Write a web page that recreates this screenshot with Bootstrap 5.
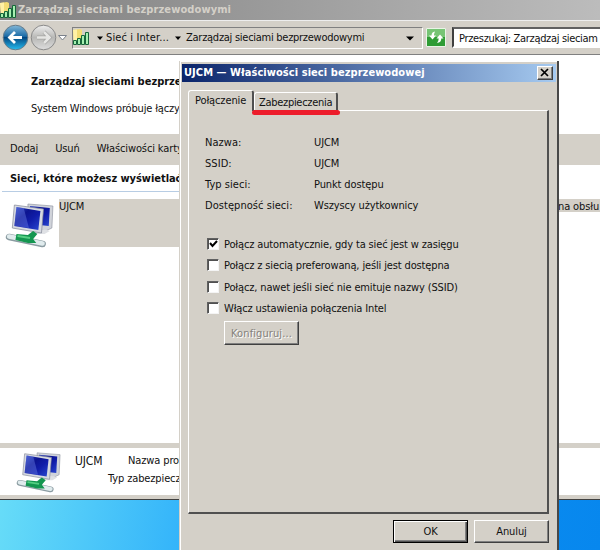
<!DOCTYPE html>
<html lang="pl">
<head>
<meta charset="utf-8">
<title>Zarządzaj sieciami bezprzewodowymi</title>
<link href="https://cdn.jsdelivr.net/npm/bootstrap@5.3.0/dist/css/bootstrap.min.css" rel="stylesheet">
<style>
:root{--face:#d4d0c8}
body{width:600px;height:550px;font:11px/14px "DejaVu Sans Condensed","DejaVu Sans",sans-serif;font-stretch:condensed;color:#111;background:linear-gradient(100deg,#67dcf8 0,#35b5fa 30%,#0b8df0 75%,#0787ee 100%) 0 500px/600px 50px no-repeat}
svg{display:block;flex:none}
.t{white-space:nowrap;letter-spacing:-.12px}
.b{font-weight:bold;letter-spacing:.06px}
.main-win{width:600px;height:500px;background:#fff;border-bottom:1px solid #404040}
.main-title{height:20px;background:linear-gradient(90deg,#808080,#bcbcbc);color:#d4d0c8;padding-top:1px}
.main-title .t{padding:2px 0 0 2px;letter-spacing:.1px}
.addr-bar{height:35px;background:var(--face);border-top:1px solid #eee;border-bottom:1px solid #808080;padding-top:6px}
.orbs{margin-top:-4px}
.crumbs{width:351px;height:22px;border:1px solid #fff;border-top-color:#808080;border-left-color:#808080}
.crumbs .t{padding-top:3px}
.c-wide{letter-spacing:.12px}
.c-tight{letter-spacing:-.27px}
.refresh{margin:0 5px 0 3px}
.search-box{width:149px;height:21px;background:#fff;border:2px solid #404040;border-color:#606060 #fff #fff #404040;border-right:0;padding:3px 0 0 5px}
.search-box .t{letter-spacing:-.33px}
.heading-area{height:79px;padding:20px 0 0 31px}
.heading-area .b{letter-spacing:0}
.sub-text{margin-top:13px;letter-spacing:-.17px}
.cmd-bar{height:31px;background:var(--face);padding:8px 0 0 10px;gap:17px}
.group-head{width:180px;height:26px;padding:7px 0 0 10px}
.group-head .b{letter-spacing:-.05px}
.group-line{height:1px;background:#b8cde4;margin:5px 0 0 -8px}
.list-area{height:252px;padding:8px 0 0 5px}
.list-icon{margin-top:3px}
.sel{width:135px;height:48px;background:var(--face);margin-left:4px;padding-top:1px}
.sel-end{height:13px;background:var(--face);margin-left:364px;width:42px;line-height:15px}
.details{height:52px;border-top:5px solid var(--face);padding:3px 0 0 16px}
.det-name{font-size:12px;margin:3px 0 0 13px;width:33px}
.det-a{margin:3px 0 4px 20px}
.bottom-edge{height:4px;background:var(--face)}
.dialog-win{left:179px;top:61px;width:380px;height:489px;background:var(--face);border-left:1px solid var(--face);border-right:2px solid #484848;box-shadow:inset 1px 1px #fff;padding:3px 1px 0 2px}
.dlg-title{height:18px;background:linear-gradient(90deg,#0a246a,#a6caf0);color:#fff;padding-left:2px}
.dlg-title .t{padding-top:2px}
.close-btn{width:16px;height:14px;margin:2px 3px 0 0}
.raised{background:var(--face);border:1px solid;border-color:#fff #404040 #404040 #fff;box-shadow:inset -1px -1px #808080}
.tabs-row{height:28px;padding:8px 0 0 6px}
.tab-btn{border:1px solid #fff;border-right:2px solid #505050;border-bottom:0;border-radius:3px 3px 0 0}
.tab-a{width:66px;height:21px;padding:3px 0 0 6px;background:var(--face);position:relative;z-index:1}
.tab-b{width:84px;height:18px;margin-top:2px;padding:3px 0 0 4px;letter-spacing:-.3px}
.panel{width:361px;height:404px;margin-left:6px;border:1px solid #fff;border-right:2px solid #505050;border-bottom:2px solid #505050;padding:25px 0 0 16px}
.red-line{left:72px;top:49px;width:88px;height:5px;border-radius:3px;background:#ed1c2b;z-index:2}
.field-row{height:21px}
.field-name{width:109px;letter-spacing:.05px}
.opts{padding:18px 0 0 2px}
.opt-row{height:21.300px}
.chk{width:12px;height:12px;margin:0 5px 0 0;background:#fff;border:1px solid;border-color:#606060 #f4f4f4 #f4f4f4 #606060;box-shadow:inset 1px 1px #505050}
.opt-row .t{letter-spacing:-.14px}
.conf{width:75px;height:24px;margin:-2px 0 0 17px;color:#85827c;text-shadow:1px 1px #fff;letter-spacing:.1px;padding-top:1px}
.foot{padding:6px 0 0 211px;gap:6px}
.ok{width:75px;height:23px;border:1px solid #000;box-shadow:inset 1px 1px #fff,inset -1px -1px #505050,inset -2px -2px #808080}
.cancel{width:75px;height:23px}
</style>
<script src="https://cdn.jsdelivr.net/npm/bootstrap@5.3.0/dist/js/bootstrap.bundle.min.js"></script>
</head>
<body class="m-0 position-relative overflow-hidden">
<svg width="0" height="0" class="position-absolute">
<defs>
<linearGradient id="scr" x2="1" y2="1"><stop stop-color="#3048c8"/><stop offset=".35" stop-color="#0c1490"/><stop offset=".6" stop-color="#101ca8"/><stop offset="1" stop-color="#2a48d0"/></linearGradient>
<linearGradient id="orb" x2="0" y2="1"><stop stop-color="#83b8d8"/><stop offset=".45" stop-color="#1c6ca8"/><stop offset=".5" stop-color="#034882"/><stop offset="1" stop-color="#26bdf0"/></linearGradient>
<linearGradient id="gorb" x2="0" y2="1"><stop stop-color="#eee"/><stop offset=".5" stop-color="#b8b8b6"/><stop offset="1" stop-color="#ddd"/></linearGradient>
<symbol id="sig" viewBox="0 0 17 17"><path d="M0 2L7 1L9 2V12L1 14Z" fill="#f3dd74"/><path d="M0 2L4 1.500V13L1 14Z" fill="#fff1a5"/><g fill="#a5f0b0" stroke="#16663a"><path d="M.5 12.500h3v4h-3zM4.500 10.500h3v6h-3zM8.500 7.500h3v9h-3zM12.500 4.500h3v12h-3z"/></g></symbol>
<symbol id="net" viewBox="0 0 50 48"><path d="M24 4L48 6L47 28L41 31L24 25Z" fill="#d0d3da" stroke="#8a8f9d" stroke-width=".6"/><path d="M26 6L45 8L44 26L26 24Z" fill="url(#scr)"/><path d="M28 31Q40 28 45 31L40 34L25 34Z" fill="#dfe1e5"/><path d="M11 5L39 9L37 33L9 28Z" fill="#d7dae1" stroke="#848998" stroke-width=".7"/><path d="M13 7L36 11L34 30L11 26Z" fill="url(#scr)"/><path d="M13 7L20 8L25 28L11 26Z" fill="#7187ec" opacity=".4"/><path d="M6 37L38 44" stroke="#8b9ca2" stroke-width="6.500" stroke-linecap="round"/><path d="M6 36.500L38 43.500" stroke="#e0ebed" stroke-width="4.500" stroke-linecap="round"/><path d="M13 34L24 35L29 31L33 34L29 39L32 43L24 43L12 40Z" fill="#149650"/><path d="M14 36L26 38" stroke="#55cf83" stroke-width="2"/></symbol>
</defs></svg>

<div class="main-win">
  <div class="main-title d-flex">
    <svg width="16" height="17"><use href="#sig" width="17" height="17"/></svg>
    <div class="t b">Zarządzaj sieciami bezprzewodowymi</div>
  </div>
  <div class="addr-bar d-flex">
    <svg class="orbs" width="72" height="28" viewBox="0 0 72 28">
      <circle cx="15.500" cy="14.500" r="12.300" fill="url(#orb)" stroke="#687b88"/><path d="M22 14.500H10M15 9L9.500 14.500L15 20" fill="none" stroke="#fff" stroke-width="2.800"/>
      <circle cx="43.500" cy="14.500" r="12.300" fill="url(#gorb)" stroke="#898989"/><path d="M37 14.500H49M44 9L49.500 14.500L44 20" fill="none" stroke="#a5a5a3" stroke-width="4"/><path d="M37 14.500H49M44 9L49.500 14.500L44 20" fill="none" stroke="#e6e6e4" stroke-width="2.600"/>
      <path d="M58.500 12.500H66.500L62.500 17Z" fill="#fff" stroke="#7c828b"/>
    </svg>
    <div class="crumbs d-flex flex-shrink-0">
      <svg width="17" height="17"><use href="#sig" width="17" height="17"/></svg>
      <svg width="16" height="20"><path d="M7 8.500h6l-3 3.500z"/></svg>
      <div class="t c-wide">Sieć i Inter...</div>
      <svg width="17" height="20"><path d="M6 8.500h6l-3 3.500z"/></svg>
      <div class="t c-tight">Zarządzaj sieciami bezprzewodowymi</div>
      <svg width="16" height="20" class="ms-auto"><path d="M0 8.500h8l-4 4z"/></svg>
    </div>
    <svg class="refresh" width="21" height="21" viewBox="0 0 21 21"><path d="M.5 1.500h19v18H.5z" fill="#2f9c35" stroke="#e9f4e6"/><path d="M1 2h18v8H1z" fill="#77c475"/><path d="M9 4.500Q5.500 5 5.500 8.500H3L6.500 12.500L10 8.500H8Q8 6.500 9 4.500Z" fill="#fff"/><path d="M14 7.500L10.500 11.500H12.700Q12.700 14 11 16Q15.300 15.500 15.300 11.500H17.500Z" fill="#fff"/></svg>
    <div class="search-box flex-shrink-0"><div class="t">Przeszukaj: Zarządzaj sieciam</div></div>
  </div>
  <div class="heading-area">
    <div class="t b">Zarządzaj sieciami bezprzewodowymi</div>
    <div class="t sub-text">System Windows próbuje łączyć się</div>
  </div>
  <div class="cmd-bar d-flex"><div class="t">Dodaj</div><div class="t">Usuń</div><div class="t">Właściwości karty</div></div>
  <div class="group-head"><div class="t b">Sieci, które możesz wyświetlać</div><div class="group-line"></div></div>
  <div class="list-area d-flex">
    <svg class="list-icon" width="50" height="46" viewBox="2 2 48 46" preserveAspectRatio="none"><use href="#net" width="50" height="48"/></svg>
    <div class="sel t">UJCM</div>
    <div class="sel-end t flex-shrink-0">na obsłu</div>
  </div>
  <div class="details d-flex">
    <svg width="46" height="42" viewBox="2 2 48 46" preserveAspectRatio="none"><use href="#net" width="50" height="48"/></svg>
    <div class="t det-name">UJCM</div>
    <div><div class="t det-a">Nazwa profilu:</div><div class="t">Typ zabezpieczeń:</div></div>
  </div>
  <div class="bottom-edge"></div>
</div>

<div class="dialog-win position-absolute">
  <div class="dlg-title d-flex justify-content-between">
    <div class="t b">UJCM — Właściwości sieci bezprzewodowej</div>
    <div class="close-btn raised"><svg width="14" height="12"><path d="M3 2L10 9M10 2L3 9" stroke="#000" stroke-width="1.700"/></svg></div>
  </div>
  <div class="tabs-row d-flex"><div class="tab-btn tab-a t">Połączenie</div><div class="tab-btn tab-b t">Zabezpieczenia</div></div>
  <div class="panel">
    <div class="field-row d-flex"><div class="t field-name">Nazwa:</div><div class="t">UJCM</div></div>
    <div class="field-row d-flex"><div class="t field-name">SSID:</div><div class="t">UJCM</div></div>
    <div class="field-row d-flex"><div class="t field-name">Typ sieci:</div><div class="t">Punkt dostępu</div></div>
    <div class="field-row d-flex"><div class="t field-name">Dostępność sieci:</div><div class="t">Wszyscy użytkownicy</div></div>
    <div class="opts">
      <div class="opt-row d-flex"><div class="chk"><svg width="10" height="10"><path d="M2 4L4.500 7L9 2" fill="none" stroke="#000" stroke-width="2"/></svg></div><div class="t">Połącz automatycznie, gdy ta sieć jest w zasięgu</div></div>
      <div class="opt-row d-flex"><div class="chk"></div><div class="t">Połącz z siecią preferowaną, jeśli jest dostępna</div></div>
      <div class="opt-row d-flex"><div class="chk"></div><div class="t">Połącz, nawet jeśli sieć nie emituje nazwy (SSID)</div></div>
      <div class="opt-row d-flex"><div class="chk"></div><div class="t">Włącz ustawienia połączenia Intel</div></div>
      <div class="conf raised t d-flex align-items-center justify-content-center">Konfiguruj...</div>
    </div>
  </div>
  <div class="foot d-flex"><div class="ok t d-flex align-items-center justify-content-center">OK</div><div class="cancel raised t d-flex align-items-center justify-content-center">Anuluj</div></div>
  <div class="red-line position-absolute"></div>
</div>
</body>
</html>
